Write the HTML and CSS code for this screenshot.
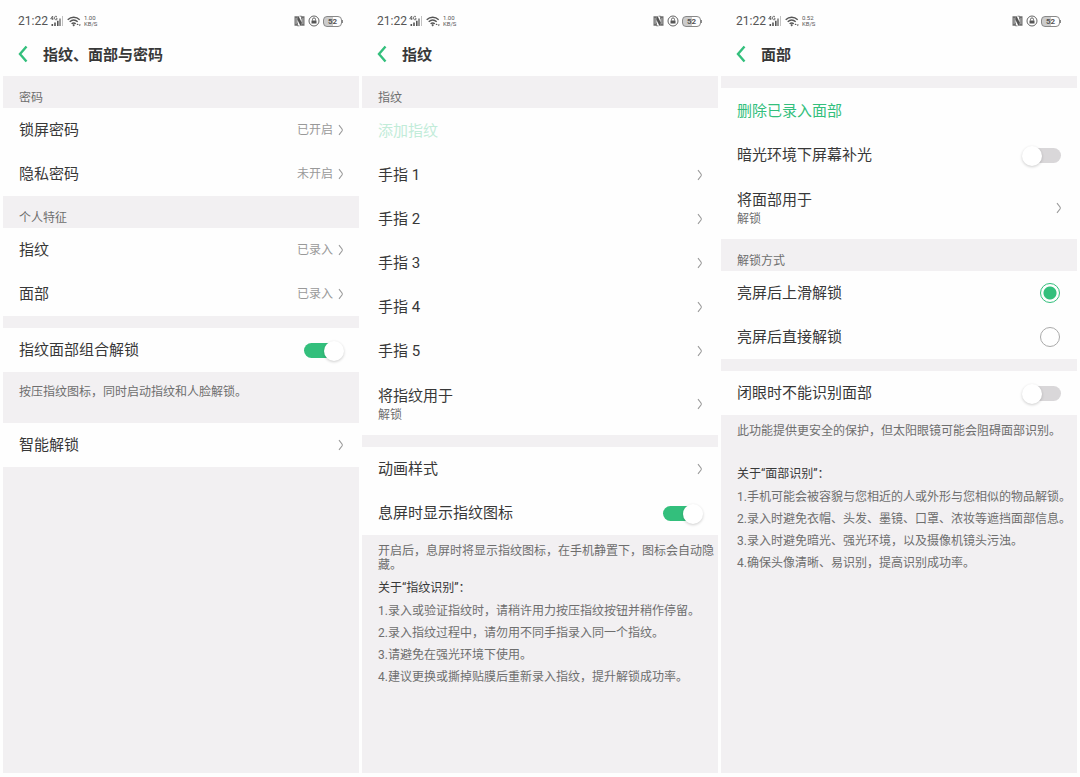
FILE: index.html
```html
<!DOCTYPE html>
<html lang="zh-CN">
<head>
<meta charset="utf-8">
<meta name="viewport" content="width=device-width, initial-scale=1">
<title>指纹、面部与密码</title>
<link rel="stylesheet" href="styles.css">
</head>
<body>
<svg class="sprite" aria-hidden="true">
  <symbol id="signal" viewBox="0 0 13 12">
    <path d="M2.600 1 .7 3.800h2.700M2.700 1v4M7 1.700C5.700.6 4.500 1.400 4.500 3s1.300 2.400 2.500 1.500V3.200H6" fill="none" stroke="currentColor" stroke-width=".8"/>
    <path d="M1.500 9h1.600v2H1.500zM4.200 7.500h1.600V11H4.200zM7 5.800h1.600V11H7z" fill="currentColor"/>
    <path d="M9.300 3.500h1.400V11H9.300z" fill="currentColor" opacity=".85"/>
    <path d="M12 1h.9v10H12z" fill="currentColor" opacity=".4"/>
  </symbol>
  <symbol id="wifi" viewBox="0 0 15 11">
    <g fill="none" stroke="currentColor" stroke-width="1.400">
      <path d="M.7 3.700C4.200.4 9.200.4 12.700 3.700M2.700 5.800c2.400-2.100 5.600-2.100 8 0M4.600 7.800c1.300-1.100 2.900-1.100 4.200 0"/>
    </g>
    <path d="M5.400 9 6.700 8l1.300 1-1.300 1.500zM9.500 9l1.100-1.600L11.700 9zM11.800 8.500h2l-1 1.700z" fill="currentColor"/>
  </symbol>
  <symbol id="nfc" viewBox="0 0 11 12">
    <path d="M.5 1.200h2.900v9.600H.5zM7.600 1.200h2.900v9.600H7.600z" fill="currentColor" opacity=".85"/>
    <path d="M3.400 1.200h1.200l3 6v3.600H6.400l-3-6z" fill="currentColor"/>
    <path d="M2.100 3v6M8.900 3v6" fill="none" stroke="#fefefe" stroke-width=".5"/>
    <path d="M5.500 1.200h2.100v3M3.400 7.800v3h2.100" fill="none" stroke="currentColor" stroke-width=".7"/>
  </symbol>
  <symbol id="lock" viewBox="0 0 12 12">
    <circle cx="6" cy="6" r="5" fill="none" stroke="currentColor" stroke-width=".9"/>
    <path d="M3.500 5.500h5v3h-5z" fill="currentColor"/>
    <path d="M4.500 5.500V4.400a1.500 1.500 0 0 1 3 0v1.100" fill="none" stroke="currentColor" stroke-width=".9"/>
  </symbol>
  <symbol id="back" viewBox="0 0 10 18">
    <path d="M8.500 1.500 2 9l6.500 7.500" fill="none" stroke="currentColor" stroke-width="2.400"/>
  </symbol>
  <symbol id="chevron" viewBox="0 0 6 12">
    <path d="M1 1.200 4 5q.7 1 0 2L1 10.800" fill="none" stroke="currentColor" stroke-width="1.100"/>
  </symbol>
</svg>

<main class="board">
  <section class="screen">
    <div class="status">
      <time class="clock">21:22</time>
      <svg class="signal"><use href="#signal"/></svg>
      <svg class="wifi"><use href="#wifi"/></svg>
      <span class="speed"><span>1.00</span><span>KB/S</span></span>
      <svg class="nfc"><use href="#nfc"/></svg>
      <svg class="lock"><use href="#lock"/></svg>
      <span class="battery">52</span>
    </div>
    <header class="bar">
      <button class="back" type="button" aria-label="返回"><svg><use href="#back"/></svg></button>
      <h1 class="title">指纹、面部与密码</h1>
    </header>
    <div class="content">
      <h2 class="label">密码</h2>
      <div class="group">
        <a class="row" href="#"><span class="name">锁屏密码</span><span class="value">已开启</span><svg class="chevron"><use href="#chevron"/></svg></a>
        <a class="row" href="#"><span class="name">隐私密码</span><span class="value">未开启</span><svg class="chevron"><use href="#chevron"/></svg></a>
      </div>
      <h2 class="label">个人特征</h2>
      <div class="group">
        <a class="row" href="#"><span class="name">指纹</span><span class="value">已录入</span><svg class="chevron"><use href="#chevron"/></svg></a>
        <a class="row" href="#"><span class="name">面部</span><span class="value">已录入</span><svg class="chevron"><use href="#chevron"/></svg></a>
      </div>
      <div class="group spaced">
        <label class="row"><span class="name">指纹面部组合解锁</span><input class="switch" type="checkbox" role="switch" checked></label>
      </div>
      <p class="hint">按压指纹图标，同时启动指纹和人脸解锁。</p>
      <div class="group">
        <a class="row" href="#"><span class="name">智能解锁</span><svg class="chevron"><use href="#chevron"/></svg></a>
      </div>
    </div>
  </section>

  <section class="screen">
    <div class="status">
      <time class="clock">21:22</time>
      <svg class="signal"><use href="#signal"/></svg>
      <svg class="wifi"><use href="#wifi"/></svg>
      <span class="speed"><span>1.00</span><span>KB/S</span></span>
      <svg class="nfc"><use href="#nfc"/></svg>
      <svg class="lock"><use href="#lock"/></svg>
      <span class="battery">52</span>
    </div>
    <header class="bar">
      <button class="back" type="button" aria-label="返回"><svg><use href="#back"/></svg></button>
      <h1 class="title">指纹</h1>
    </header>
    <div class="content">
      <h2 class="label">指纹</h2>
      <div class="group long">
        <button class="row action" type="button" disabled>添加指纹</button>
        <a class="row" href="#"><span class="name">手指 1</span><svg class="chevron"><use href="#chevron"/></svg></a>
        <a class="row" href="#"><span class="name">手指 2</span><svg class="chevron"><use href="#chevron"/></svg></a>
        <a class="row" href="#"><span class="name">手指 3</span><svg class="chevron"><use href="#chevron"/></svg></a>
        <a class="row" href="#"><span class="name">手指 4</span><svg class="chevron"><use href="#chevron"/></svg></a>
        <a class="row" href="#"><span class="name">手指 5</span><svg class="chevron"><use href="#chevron"/></svg></a>
        <a class="row double" href="#"><span class="name">将指纹用于<small class="sub">解锁</small></span><svg class="chevron"><use href="#chevron"/></svg></a>
      </div>
      <div class="group spaced">
        <a class="row" href="#"><span class="name">动画样式</span><svg class="chevron"><use href="#chevron"/></svg></a>
        <label class="row"><span class="name">息屏时显示指纹图标</span><input class="switch" type="checkbox" role="switch" checked></label>
      </div>
      <div class="notes">
        <p class="text">开启后，息屏时将显示指纹图标，在手机静置下，图标会自动隐藏。</p>
        <h2 class="about">关于“指纹识别”：</h2>
        <ol class="tips">
          <li>录入或验证指纹时，请稍许用力按压指纹按钮并稍作停留。</li>
          <li>录入指纹过程中，请勿用不同手指录入同一个指纹。</li>
          <li>请避免在强光环境下使用。</li>
          <li>建议更换或撕掉贴膜后重新录入指纹，提升解锁成功率。</li>
        </ol>
      </div>
    </div>
  </section>

  <section class="screen">
    <div class="status">
      <time class="clock">21:22</time>
      <svg class="signal"><use href="#signal"/></svg>
      <svg class="wifi"><use href="#wifi"/></svg>
      <span class="speed"><span>0.52</span><span>KB/S</span></span>
      <svg class="nfc"><use href="#nfc"/></svg>
      <svg class="lock"><use href="#lock"/></svg>
      <span class="battery">52</span>
    </div>
    <header class="bar">
      <button class="back" type="button" aria-label="返回"><svg><use href="#back"/></svg></button>
      <h1 class="title">面部</h1>
    </header>
    <div class="content">
      <div class="group spaced long">
        <button class="row action" type="button">删除已录入面部</button>
        <label class="row"><span class="name">暗光环境下屏幕补光</span><input class="switch" type="checkbox" role="switch"></label>
        <a class="row double" href="#"><span class="name">将面部用于<small class="sub">解锁</small></span><svg class="chevron"><use href="#chevron"/></svg></a>
      </div>
      <h2 class="label">解锁方式</h2>
      <div class="group">
        <label class="row"><span class="name">亮屏后上滑解锁</span><input class="radio" type="radio" name="unlock" checked></label>
        <label class="row"><span class="name">亮屏后直接解锁</span><input class="radio" type="radio" name="unlock"></label>
      </div>
      <div class="group spaced">
        <label class="row"><span class="name">闭眼时不能识别面部</span><input class="switch" type="checkbox" role="switch"></label>
      </div>
      <div class="notes roomy">
        <p class="text">此功能提供更安全的保护，但太阳眼镜可能会阻碍面部识别。</p>
        <h2 class="about">关于“面部识别”：</h2>
        <ol class="tips">
          <li>手机可能会被容貌与您相近的人或外形与您相似的物品解锁。</li>
          <li>录入时避免衣帽、头发、墨镜、口罩、浓妆等遮挡面部信息。</li>
          <li>录入时避免暗光、强光环境，以及摄像机镜头污浊。</li>
          <li>确保头像清晰、易识别，提高识别成功率。</li>
        </ol>
      </div>
    </div>
  </section>
</main>
</body>
</html>
```
FILE: styles.css
```css
:root {
  --paper: #fefefe;
  --gray: #f2f0f2;
  --ink: #383838;
  --muted: #6e6e6e;
  --faint: #999;
  --green: #33bf7c;
}

* {
  box-sizing: border-box;
}

body {
  margin: 0;
  background: var(--paper);
  color: var(--ink);
  font-family: Roboto, "Noto Sans CJK SC", sans-serif;
  font-size: 15px;
}

h1, h2, p, ol {
  margin: 0;
  padding: 0;
  font-weight: 400;
}

svg {
  display: block;
  flex: none;
}

.sprite {
  position: absolute;
  width: 0;
  height: 0;
}

.board {
  display: grid;
  grid-template-columns: repeat(3, minmax(0, 1fr));
  gap: 3px;
  min-height: 100vh;
  padding: 10px 3px 4px;
}

.screen {
  display: flex;
  flex-direction: column;
}

/* Status bar */
.status {
  display: flex;
  align-items: center;
  height: 22px;
  padding: 0 16px 0 15px;
  color: #555;
}

.clock {
  margin-right: 2px;
  font-size: 12px;
}

.signal {
  width: 13px;
  height: 12px;
  margin-right: 4px;
}

.wifi {
  width: 15px;
  height: 11px;
  margin-right: 2px;
}

.speed {
  display: flex;
  flex-direction: column;
  margin-right: auto;
  font-size: 6px;
  line-height: 6px;
}

.nfc {
  width: 11px;
  height: 12px;
  margin-right: 3px;
}

.lock {
  width: 12px;
  height: 12px;
  margin-right: 3px;
}

.battery {
  position: relative;
  width: 19px;
  margin-right: 1px;
  border: 1px solid #888;
  border-radius: 4px;
  background: linear-gradient(to right, #ccc 50%, var(--paper) 50%);
  font-size: 8px;
  font-weight: 700;
  line-height: 9px;
  text-align: center;
}

.battery::after {
  content: "";
  position: absolute;
  top: 3px;
  right: -2px;
  width: 1px;
  height: 3px;
  background: #888;
}

/* Title bar */
.bar {
  display: flex;
  align-items: center;
  gap: 15px;
  height: 44px;
  padding: 0 15px;
}

.back {
  padding: 0;
  border: 0;
  background: none;
  color: var(--green);
}

.back svg {
  width: 10px;
  height: 18px;
}

.title {
  padding-bottom: 2px;
  font-size: 15px;
  font-weight: 700;
}

/* Settings list */
.content {
  flex: 1;
  background: var(--gray);
}

.label {
  height: 32px;
  padding: 13px 16px 0;
  color: var(--muted);
  font-size: 12px;
  line-height: 18px;
}

.group {
  background: var(--paper);
}

.long {
  padding: 1px 0;
}

.spaced {
  border-top: 12px solid var(--gray);
}

.row {
  display: flex;
  align-items: center;
  gap: 5px;
  width: 100%;
  min-height: 44px;
  padding: 0 15px 0 16px;
  border: 0;
  background: none;
  color: var(--ink);
  font: inherit;
  line-height: 20px;
  text-align: left;
  text-decoration: none;
}

.double {
  min-height: 61px;
}

.double .name {
  padding-top: 3px;
}

.name {
  flex: 1;
}

.sub {
  display: block;
  color: var(--muted);
  font-size: 12px;
  line-height: 18px;
}

.action {
  color: var(--green);
}

.action:disabled {
  color: #c2ecd9;
}

.value {
  color: var(--faint);
  font-size: 12px;
}

.chevron {
  width: 6px;
  height: 12px;
  color: var(--faint);
}

/* Controls */
.switch {
  appearance: none;
  position: relative;
  width: 40px;
  height: 20px;
  margin: 0;
}

.switch::before {
  content: "";
  position: absolute;
  inset: 3px 1px 2px 4px;
  border-radius: 8px;
  background: #d9d7d9;
}

.switch::after {
  content: "";
  position: absolute;
  top: 1px;
  left: 0;
  width: 20px;
  height: 20px;
  border-radius: 50%;
  background: #fff;
  box-shadow: 0 1px 3px rgba(0, 0, 0, .2);
}

.switch:checked::before {
  inset: 3px 4px 2px 0;
  background: var(--green);
}

.switch:checked::after {
  left: 20px;
}

.radio {
  appearance: none;
  width: 20px;
  height: 20px;
  margin: 0 2px 0 0;
  border: 1px solid #aaa;
  border-radius: 50%;
}

.radio:checked {
  border-color: var(--green);
  background: radial-gradient(circle, var(--green) 6px, transparent 7px);
}

/* Explanatory text */
.hint {
  padding: 11px 16px 22px;
  color: var(--muted);
  font-size: 12px;
  line-height: 18px;
}

.notes {
  padding: 9px 4px 16px 16px;
  color: var(--muted);
  font-size: 12px;
}

.text {
  line-height: 14px;
}

.about {
  margin: 8px 0 4px;
  color: var(--ink);
  font-size: 12px;
  line-height: 16px;
}

.roomy .about {
  margin-top: 28px;
}

.tips {
  line-height: 22px;
  counter-reset: tip;
}

.tips li {
  list-style: none;
  counter-increment: tip;
}

.tips li::before {
  content: counter(tip) ".";
}
```
